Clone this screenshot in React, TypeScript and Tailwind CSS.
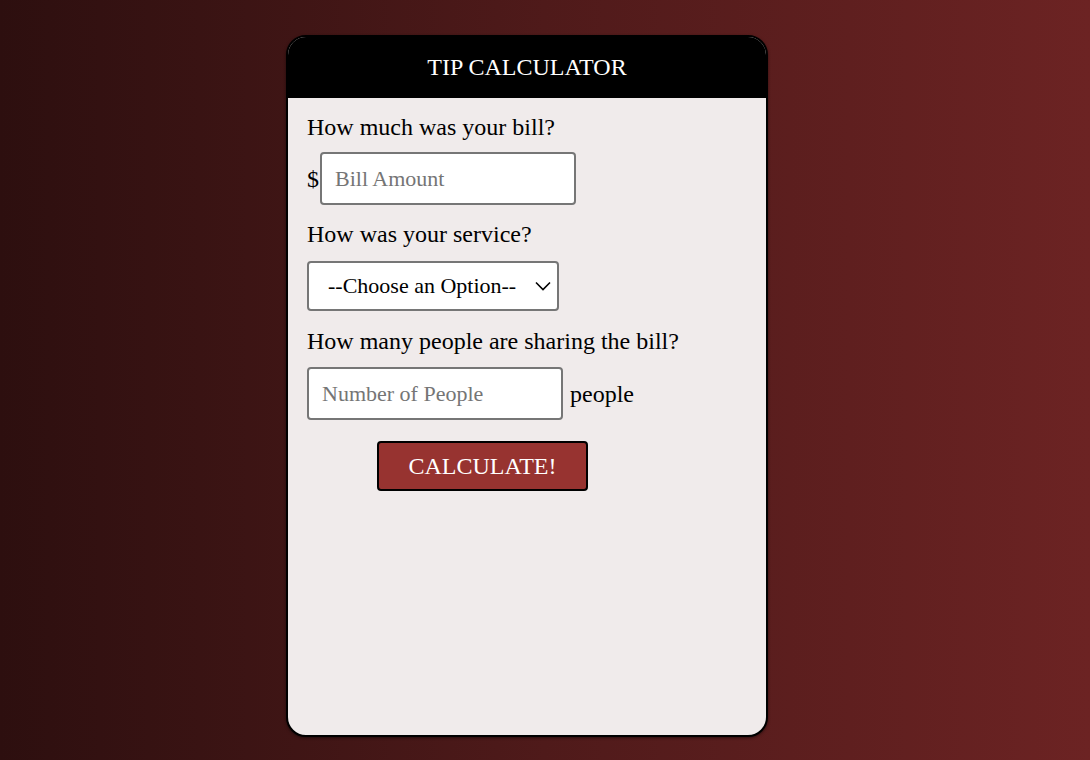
export default function App() {
  return (
    <div className="flex h-[760px] w-full justify-center bg-gradient-to-r from-[#2d0f0f] via-[#4f1a1a] to-[#6c2323] pr-[36px] pt-[35px] font-['Liberation_Serif',serif]">
      <div className="flex h-[702px] w-[482px] flex-col overflow-hidden rounded-[20px] border-2 border-black bg-[#f0ebeb] shadow-[0_1px_3px_rgba(0,0,0,0.5)]">
        <div className="flex h-[61px] shrink-0 items-center justify-center bg-black pb-[1px] text-[24px] text-white">
          TIP CALCULATOR
        </div>
        <div className="flex flex-col px-[19px] pt-[15px] text-[24px] leading-[28px] text-black">
          <p>How much was your bill?</p>
          <div className="mt-[11px] flex items-center">
            <span>$</span>
            <input
              type="text"
              placeholder="Bill Amount"
              className="ml-[1px] h-[53px] w-[256px] rounded-[4px] border-2 border-[#767676] bg-white px-[13px] text-[22px] placeholder:text-[#757575] outline-none"
            />
          </div>
          <p className="mt-[15px]">How was your service?</p>
          <div className="relative mt-[13px] w-[252px]">
            <select
              defaultValue=""
              className="h-[50px] w-[252px] appearance-none rounded-[4px] border-2 border-[#767676] bg-white pl-[19px] text-[22px] text-black outline-none"
            >
              <option value="" disabled>
                --Choose an Option--
              </option>
              <option value="0.3">30% - Outstanding</option>
              <option value="0.2">20% - Good</option>
              <option value="0.15">15% - It was OK</option>
              <option value="0.1">10% - Bad</option>
              <option value="0.05">5% - Terrible</option>
            </select>
            <svg
              className="pointer-events-none absolute right-[8px] top-[20px]"
              width="16"
              height="10"
              viewBox="0 0 16 10"
              fill="none"
              stroke="black"
              strokeWidth="1.6"
            >
              <path d="M1 1.5 L8 8.5 L15 1.5" />
            </svg>
          </div>
          <p className="mt-[16px]">How many people are sharing the bill?</p>
          <div className="mt-[12px] flex items-center">
            <input
              type="text"
              placeholder="Number of People"
              className="h-[53px] w-[256px] rounded-[4px] border-2 border-[#767676] bg-white px-[13px] text-[22px] placeholder:text-[#757575] outline-none"
            />
            <span className="ml-[7px]">people</span>
          </div>
          <button
            type="button"
            className="ml-[70px] mt-[21px] h-[50px] w-[211px] rounded-[4px] border-2 border-black bg-[#973330] text-[24px] text-white"
          >
            CALCULATE!
          </button>
        </div>
      </div>
    </div>
  );
}
